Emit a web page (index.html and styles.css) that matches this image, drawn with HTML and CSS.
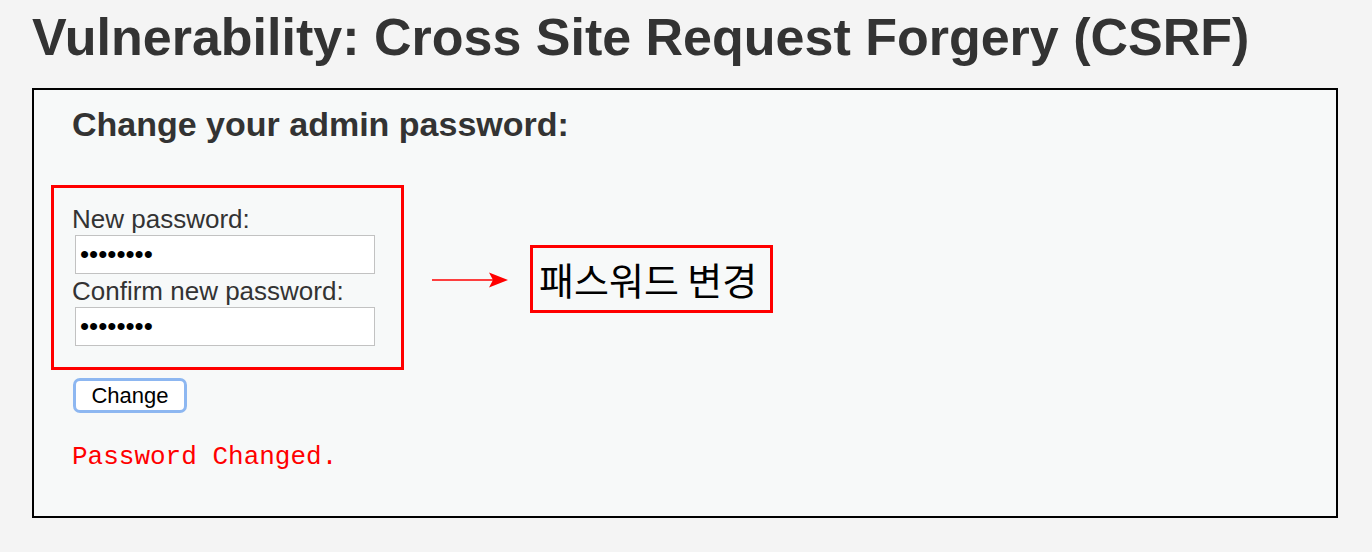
FILE: index.html
```html
<!DOCTYPE html>
<html lang="en">
<head>
    <meta charset="UTF-8">
    <title>Vulnerability: Cross Site Request Forgery (CSRF)</title>
    <link rel="stylesheet" href="styles.css">
</head>
<body>
    <div class="main-body">
        <h1 class="page-title">Vulnerability: Cross Site Request Forgery (CSRF)</h1>

        <div class="code-area">
            <h3 class="form-title">Change your admin password:</h3>

            <form class="pw-form" action="#" method="GET">
                <div class="pw-row">
                    <div class="highlight">
                        <label class="field-label" for="pwNew">New password:</label>
                        <input class="pw-input" type="password" id="pwNew" value="password">
                        <label class="field-label" for="pwConf">Confirm new password:</label>
                        <input class="pw-input" type="password" id="pwConf" value="password">
                    </div>

                    <svg class="arrow" width="76" height="18" viewBox="0 0 76 18">
                        <line x1="0" y1="9" x2="66" y2="9" stroke="#ff0000" stroke-width="1.6"/>
                        <polygon points="57,1.5 76,9 57,16.5 61,9" fill="#ff0000"/>
                    </svg>

                    <div class="note">패스워드 변경</div>
                </div>

                <button class="change-btn" type="button">Change</button>
            </form>

            <pre class="message">Password Changed.</pre>
        </div>
    </div>
</body>
</html>
```

FILE: styles.css
```css
* {
    margin: 0;
    padding: 0;
    box-sizing: border-box;
}

body {
    background: #f4f4f4;
    color: #333;
    font-family: "Liberation Sans", Arial, sans-serif;
}

.main-body {
    padding: 6px 34px 0 32px;
}

.page-title {
    font-size: 52px;
    line-height: 62px;
    font-weight: bold;
    color: #333;
    margin-bottom: 20px;
}

.code-area {
    width: 1306px;
    height: 430px;
    border: 2px solid #000;
    background: #f7f9f9;
    padding: 15px 0 0 38px;
}

.form-title {
    font-size: 34px;
    line-height: 38px;
    font-weight: bold;
    color: #333;
    margin-bottom: 42px;
}

.pw-row {
    display: flex;
    align-items: center;
}

.highlight {
    width: 353px;
    margin-left: -21px;
    border: 3px solid #ff0000;
    padding: 16px 0 19px 18px;
    display: flex;
    flex-direction: column;
    align-items: flex-start;
}

.field-label {
    font-size: 26px;
    line-height: 30px;
    color: #333;
}

.pw-input {
    width: 300px;
    height: 39px;
    margin: 1px 0 2px 3px;
    border: 1px solid #c2c2c2;
    background: #fff;
    font-family: "Liberation Sans", Arial, sans-serif;
    font-size: 26px;
    padding: 0 4px;
    color: #000;
    outline: none;
}

.arrow {
    margin-left: 28px;
    margin-top: 4px;
}

.note {
    margin-left: 22px;
    margin-top: 2px;
    border: 3px solid #ff0000;
    padding: 0 13px 0 6px;
    height: 68px;
    display: flex;
    align-items: center;
    font-family: "Noto Sans CJK KR", sans-serif;
    font-size: 38px;
    color: #000;
}

.change-btn {
    display: block;
    margin: 8px 0 0 1px;
    width: 114px;
    height: 35px;
    border: 3px solid #8db7f1;
    border-radius: 7px;
    background: #fff;
    color: #000;
    font-family: "Liberation Sans", Arial, sans-serif;
    font-size: 22px;
}

.message {
    margin-top: 29px;
    font-family: "Courier New", "Nimbus Mono PS", FreeMono, "Liberation Mono", monospace;
    font-size: 26px;
    line-height: 30px;
    color: #ff0000;
}
```
